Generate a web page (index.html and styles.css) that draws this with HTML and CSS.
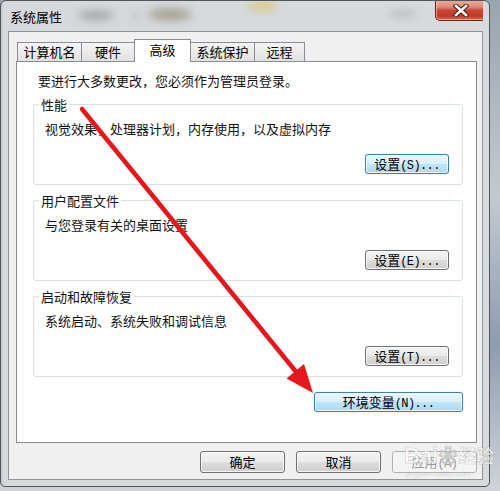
FILE: index.html
```html
<!DOCTYPE html>
<html lang="zh-CN">
<head>
<meta charset="utf-8">
<title>系统属性</title>
<link rel="stylesheet" href="styles.css">
</head>
<body>
<div class="window">
  <div class="titlebar">
    <span class="title">系统属性</span>
    <span class="blob b1"></span>
    <span class="blob b2"></span>
    <span class="blob b3"></span>
    <span class="blob b4"></span>
    <span class="blob b5"></span>
    <button class="close" aria-label="关闭">
      <svg width="18" height="13" viewBox="0 0 18 13">
        <path d="M4 2 L14 11 M14 2 L4 11" stroke="#4a1c15" stroke-width="4.6" stroke-linecap="square" fill="none"/>
        <path d="M4 2 L14 11 M14 2 L4 11" stroke="#ffffff" stroke-width="2.6" stroke-linecap="square" fill="none"/>
      </svg>
    </button>
  </div>
  <div class="client">
    <div class="tabs">
      <div class="tab t1">计算机名</div>
      <div class="tab t2">硬件</div>
      <div class="tab t3 active">高级</div>
      <div class="tab t4">系统保护</div>
      <div class="tab t5">远程</div>
    </div>
    <div class="panel">
      <p class="intro">要进行大多数更改，您必须作为管理员登录。</p>
      <fieldset class="group">
        <legend>性能</legend>
        <p class="desc">视觉效果，处理器计划，内存使用，以及虚拟内存</p>
        <button class="btn small focus">设置<span class="lat">(S)...</span></button>
      </fieldset>
      <fieldset class="group">
        <legend>用户配置文件</legend>
        <p class="desc">与您登录有关的桌面设置</p>
        <button class="btn small">设置<span class="lat">(E)...</span></button>
      </fieldset>
      <fieldset class="group">
        <legend>启动和故障恢复</legend>
        <p class="desc">系统启动、系统失败和调试信息</p>
        <button class="btn small">设置<span class="lat">(T)...</span></button>
      </fieldset>
      <button class="btn env focus">环境变量<span class="lat">(N)...</span></button>
    </div>
    <div class="actions">
      <button class="btn big">确定</button>
      <button class="btn big">取消</button>
      <button class="btn big disabled">应用<span class="lat">(A)</span></button>
    </div>
  </div>
</div>
<svg class="arrow" width="500" height="491" viewBox="0 0 500 491">
  <line x1="82" y1="109" x2="297" y2="373" stroke="#e3171c" stroke-width="4.5" stroke-linecap="round"/>
  <polygon points="313,393 286.5,378.5 304,364" fill="#e3171c"/>
</svg>
<div class="watermark">Bai<span class="paw">&#x2740;</span><span class="wm-cn">经验</span><div class="wm-url">jingyan.baidu.com</div></div>
</body>
</html>
```

FILE: styles.css
```css
html, body {
  margin: 0;
  padding: 0;
}

body {
  width: 500px;
  height: 491px;
  overflow: hidden;
  position: relative;
  background: linear-gradient(180deg, #9aa4ae 0%, #c3c9cf 40%, #8e9cb0 70%, #d0d4d8 100%);
  font-family: "Noto Sans CJK SC", "Noto Sans", sans-serif;
  font-size: 13px;
  color: #111;
}

.window {
  box-sizing: border-box;
  width: 490px;
  height: 487px;
  border: 1px solid #4f555b;
  border-radius: 6px 6px 5px 5px;
  background: linear-gradient(90deg, #c4c7ca 0px, #d6d9dc 3px, #d8dbde 100%);
  padding: 0 6px 6px 7px;
  display: flex;
  flex-direction: column;
}

.titlebar {
  height: 30px;
  display: flex;
  align-items: flex-start;
  flex-shrink: 0;
  position: relative;
  overflow: hidden;
}

.title {
  padding: 7px 0 0 2px;
  line-height: 17px;
  font-size: 13px;
  color: #000;
  position: relative;
  z-index: 1;
}

.blob {
  position: absolute;
  border-radius: 50%;
  filter: blur(4px);
}

.b1 { left: 70px; top: 10px; width: 36px; height: 9px; background: #9ea2a6; }
.b2 { left: 125px; top: 12px; width: 6px; height: 6px; background: #a9adb1; }
.b3 { left: 140px; top: 7px; width: 44px; height: 13px; background: #a8a496; }
.b4 { left: 240px; top: 0px; width: 30px; height: 10px; background: #d7c98a; }
.b5 { left: 380px; top: 10px; width: 30px; height: 6px; background: #b3b6b9; }

.close {
  margin: -1px -4px 0 auto;
  width: 52px;
  height: 21px;
  padding: 0;
  border: 1px solid #6a2318;
  border-top: none;
  border-radius: 0 0 5px 5px;
  background: linear-gradient(180deg, #eab0a2 0%, #de8a77 35%, #c9473a 52%, #c23a26 80%, #d66a4c 100%);
  box-shadow: inset 0 0 0 1px rgba(255, 215, 200, 0.55);
  display: flex;
  align-items: center;
  justify-content: center;
  position: relative;
  z-index: 1;
}

.client {
  flex: 1;
  background: #f0f0f0;
  border: 1px solid #8e949a;
  padding: 7px 5px 6px 7px;
  display: flex;
  flex-direction: column;
}

.tabs {
  height: 22px;
  display: flex;
  align-items: flex-end;
  padding-left: 1px;
  position: relative;
  z-index: 1;
  flex-shrink: 0;
}

.tab {
  box-sizing: border-box;
  height: 19px;
  border: 1px solid #898c95;
  border-bottom: none;
  margin-right: -1px;
  background: linear-gradient(180deg, #f4f4f4 0%, #ebebeb 50%, #e1e1e1 100%);
  text-align: center;
  line-height: 17px;
  font-size: 13px;
  color: #000;
}

.tab.active {
  height: 23px;
  margin-bottom: -1px;
  background: #fff;
  line-height: 19px;
  position: relative;
  z-index: 2;
}

.t1 { width: 65px; }
.t2 { width: 54px; }
.t3 { width: 57px; }
.t4 { width: 65px; }
.t5 { width: 51px; }

.panel {
  box-sizing: border-box;
  height: 382px;
  flex-shrink: 0;
  background: #fff;
  border: 1px solid #898c95;
  padding: 10px 13px 0 16px;
  display: flex;
  flex-direction: column;
}

.intro {
  margin: 0 0 7px 5px;
  line-height: 17px;
}

.group {
  margin: 0 0 7px 0;
  border: 1px solid #d5dfe5;
  border-radius: 3px;
  padding: 0 13px 10px 11px;
  display: flex;
  flex-direction: column;
}

.group legend {
  padding: 0 2px;
  margin-left: -6px;
  line-height: 17px;
  font-size: 13px;
}

.desc {
  margin: 7px 0 0 0;
  line-height: 17px;
}

.btn {
  box-sizing: border-box;
  padding: 0;
  border: 1px solid #707070;
  border-radius: 3px;
  background: linear-gradient(180deg, #f2f2f2 0%, #ebebeb 48%, #dddddd 52%, #cfcfcf 100%);
  box-shadow: inset 0 0 0 1px rgba(255, 255, 255, 0.8);
  font-family: "Noto Sans CJK SC", sans-serif;
  font-size: 13px;
  color: #000;
  line-height: 18px;
}

.lat {
  font-family: "Liberation Mono", monospace;
  font-size: 12px;
  letter-spacing: -0.6px;
}

.btn.small {
  width: 84px;
  height: 20px;
  margin-top: 17px;
  align-self: flex-end;
}

.btn.focus {
  border-color: #3c7fb1;
  background: linear-gradient(180deg, #e8f5fc 0%, #daf0fb 48%, #bfe5f8 52%, #acdaf3 100%);
  box-shadow: inset 0 0 0 1px rgba(255, 255, 255, 0.75), 0 0 1px #6fb6e6;
}

.btn.env {
  width: 149px;
  height: 20px;
  margin-top: 8px;
  align-self: flex-end;
}

.actions {
  margin-top: 8px;
  display: flex;
  justify-content: flex-end;
  gap: 11px;
}

.btn.big {
  width: 85px;
  height: 22px;
  line-height: 20px;
}

.btn.disabled {
  border-color: #adb2b5;
  background: #f4f4f4;
  color: #9a9a9a;
  box-shadow: none;
}

.arrow {
  position: absolute;
  left: 0;
  top: 0;
  pointer-events: none;
}

.watermark {
  position: absolute;
  left: 404px;
  top: 443px;
  font-family: "Liberation Sans", sans-serif;
  font-weight: bold;
  font-size: 22px;
  line-height: 24px;
  color: rgba(255, 255, 255, 0.75);
  -webkit-text-stroke: 0.6px rgba(140, 140, 140, 0.45);
  pointer-events: none;
  white-space: nowrap;
}

.paw {
  font-size: 18px;
  margin: 0 1px;
}

.wm-cn {
  font-family: "Noto Sans CJK SC", sans-serif;
  font-size: 18px;
}

.wm-url {
  font-size: 8px;
  line-height: 10px;
  font-weight: normal;
  -webkit-text-stroke: 0;
  color: rgba(160, 160, 160, 0.35);
  margin-left: 2px;
}
```
